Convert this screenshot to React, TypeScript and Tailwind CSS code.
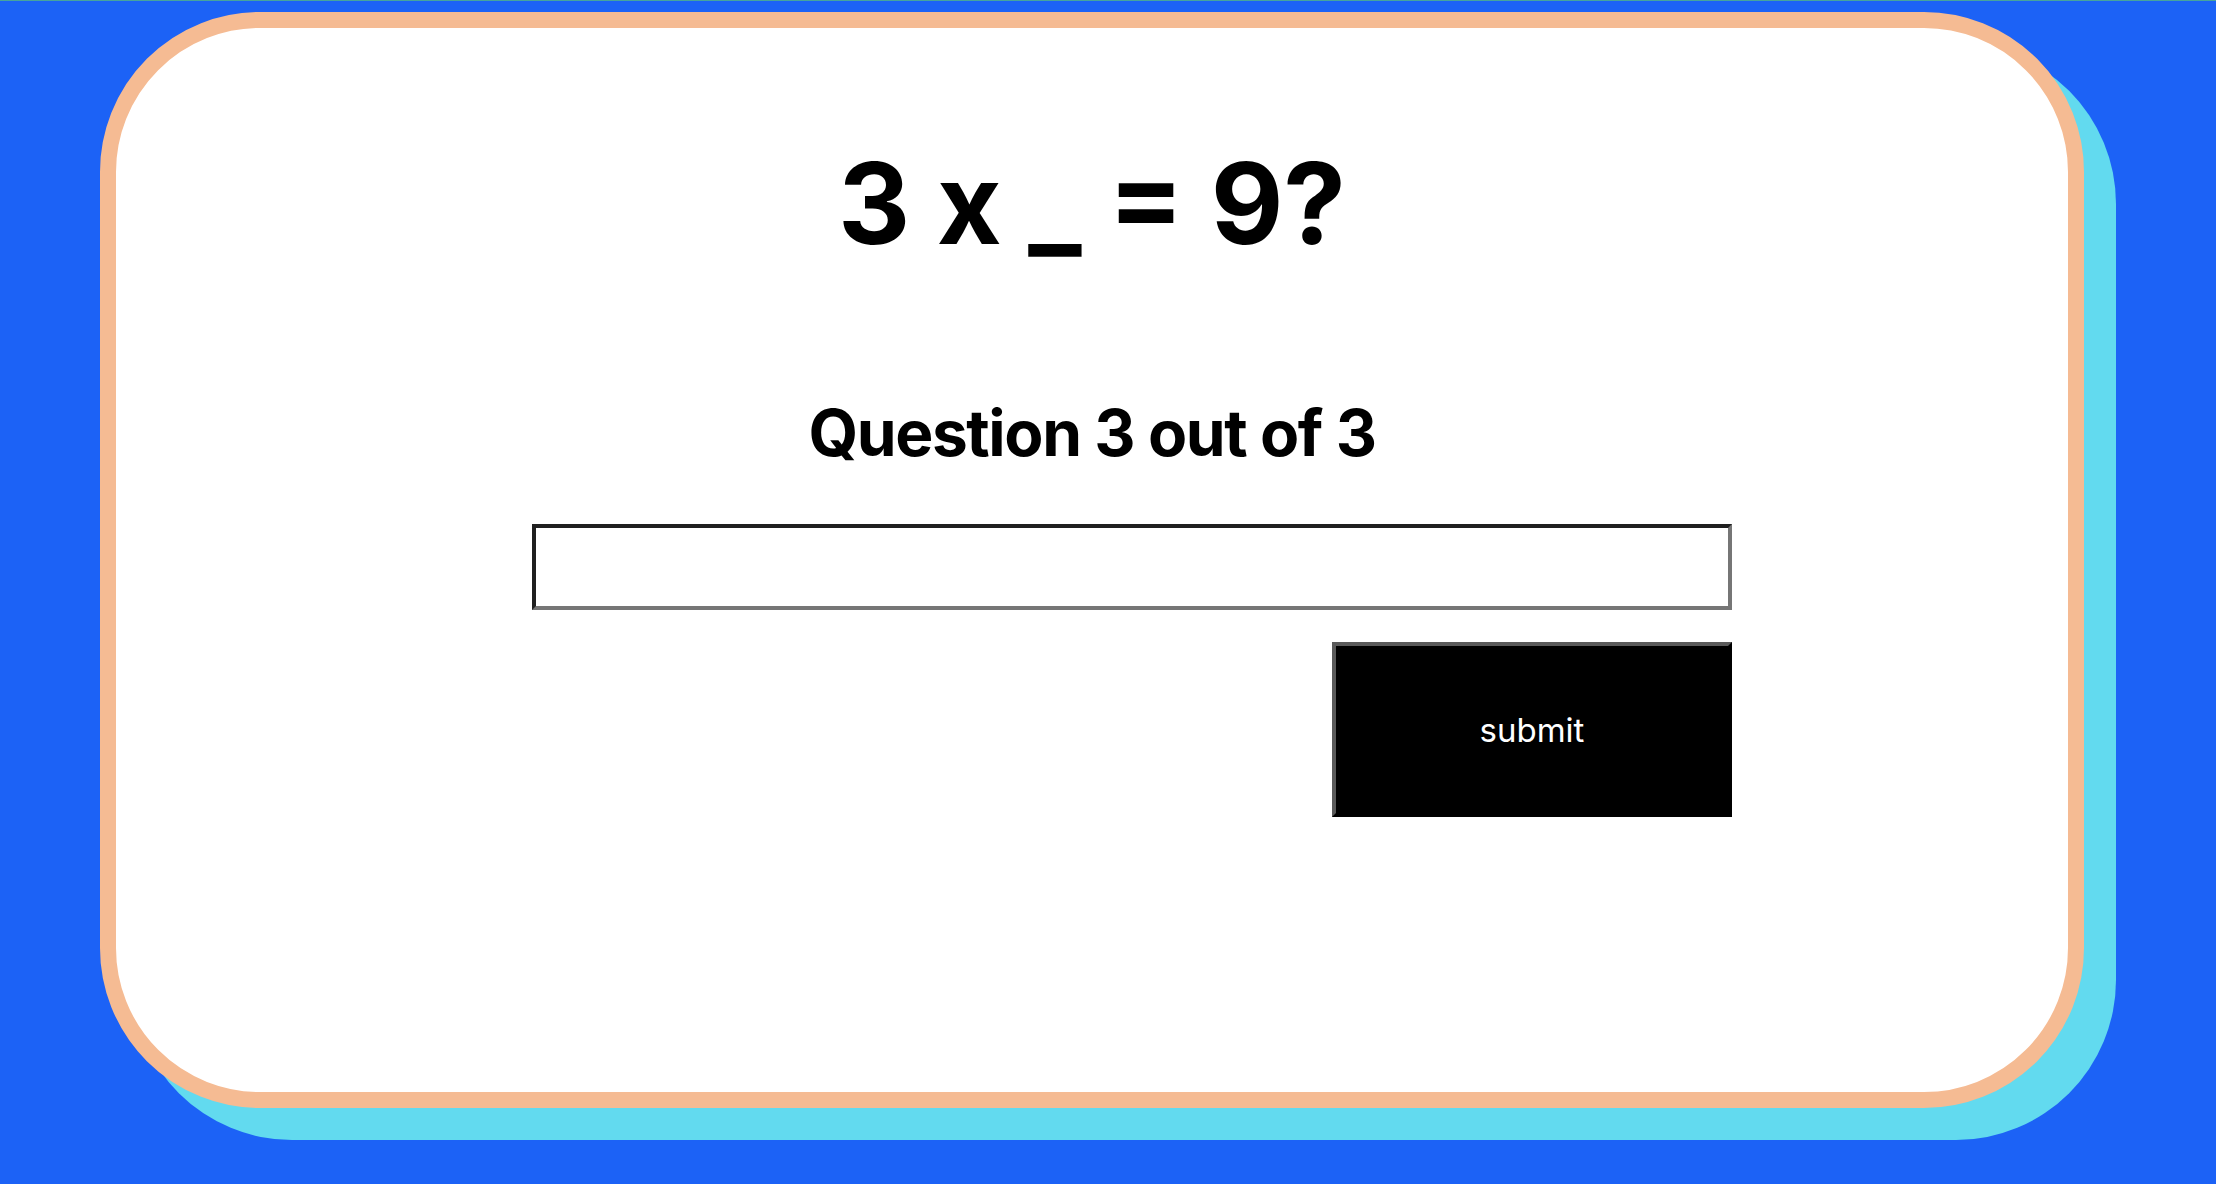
export default function App() {
  return (
    <div className="w-full h-[1184px] bg-[#1c62f6] overflow-hidden font-['Inter','Liberation_Sans',sans-serif]">
      <div className="h-px bg-[#47a49c]" />
      <div className="mt-[11px] ml-[100px] w-[1984px] h-[1096px] rounded-[160px] border-[16px] border-[#f5bb93] bg-white shadow-[32px_32px_0_0_#62daef]">
        <div className="flex flex-col items-center pt-[119px]">
          <h1 className="text-[112px] leading-none font-bold text-black">3 x _ = 9?</h1>
          <h2 className="mt-[142px] text-[64px] leading-none font-bold tracking-[-0.022em] text-black">Question 3 out of 3</h2>
        </div>
        <div className="mt-[59px] ml-[416px] w-[1200px] flex flex-col items-end gap-[32px]">
          <input
            type="text"
            className="w-full h-[86px] border-4 border-t-[#1f1f1f] border-l-[#1f1f1f] border-b-[#767676] border-r-[#767676] bg-white px-2 text-[32px] outline-none"
          />
          <button className="w-[400px] h-[175px] bg-black text-white text-[33px] pt-[2px] border-4 border-t-[#5a5a5a] border-l-[#5a5a5a] border-b-black border-r-black">
            submit
          </button>
        </div>
      </div>
    </div>
  );
}
